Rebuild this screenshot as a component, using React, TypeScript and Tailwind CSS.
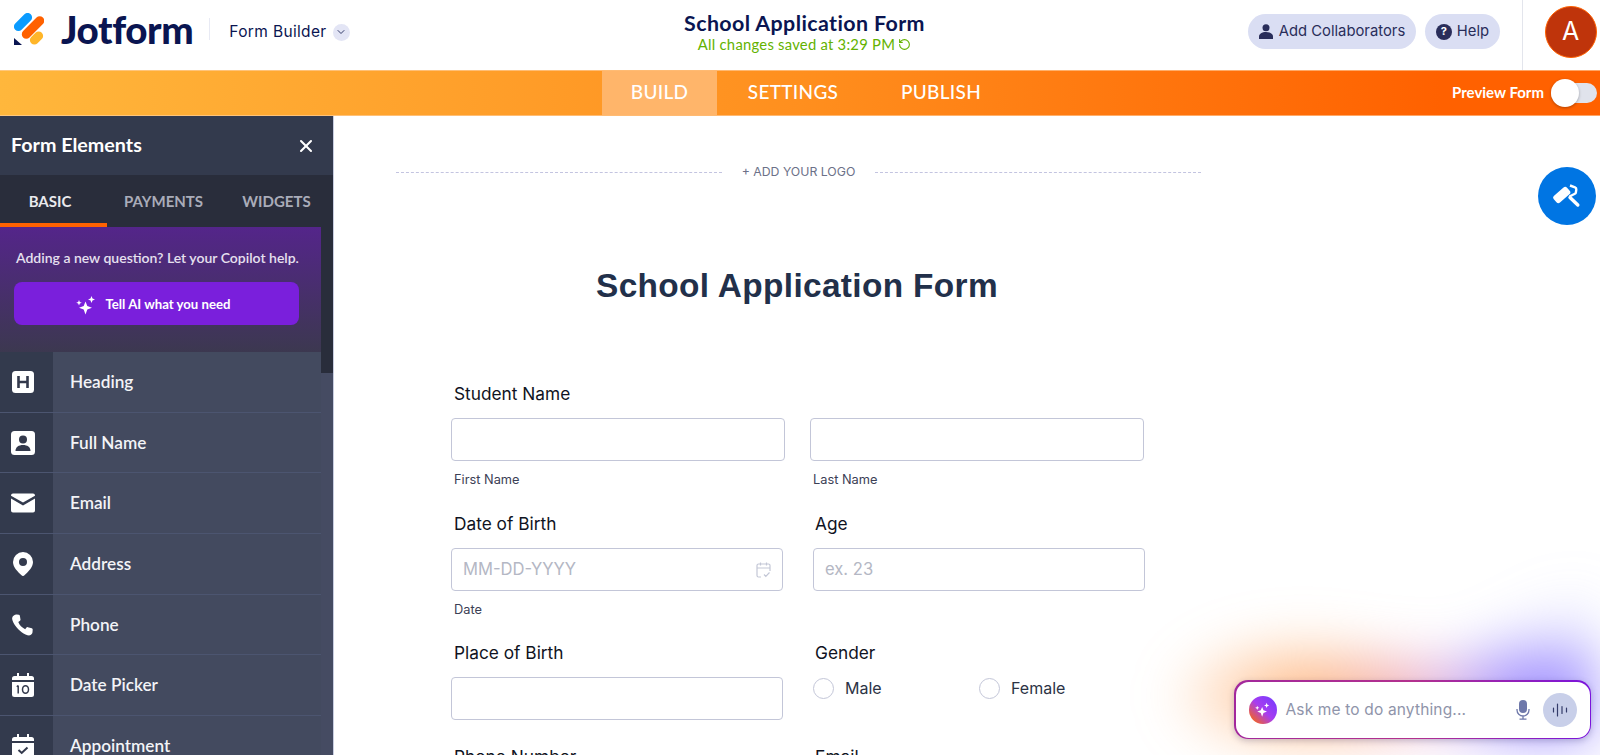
import React from "react";
import { X, ChevronDown, RotateCw } from "lucide-react";

const HEAD_FONT = "font-['Lato','Noto_Sans',sans-serif]";

function JotformMark() {
  return (
    <svg width="30" height="32" viewBox="0 0 30 32" aria-hidden="true">
      <rect x="-2" y="4.500" width="22" height="9" rx="4.500" fill="#0a9bff" transform="rotate(-45 9 9)" />
      <rect x="5" y="10" width="28" height="9" rx="4.500" fill="#ff6100" transform="rotate(-45 19 14.500)" />
      <rect x="15" y="20.500" width="15" height="9" rx="4.500" fill="#ffb629" transform="rotate(-45 22.500 25)" />
      <path d="M0 25 L8 32 H0 Z" fill="#0a1551" />
    </svg>
  );
}

function Sparkles({ size = 20 }: { size?: number }) {
  return (
    <svg width={size} height={size} viewBox="0 0 20 20" fill="#fff" aria-hidden="true">
      <path d="M9.500 6.500 L11.300 11 L16 12.800 L11.300 14.600 L9.500 19.500 L7.700 14.600 L3 12.800 L7.700 11 Z" />
      <path d="M15.500 1 L16.500 3.500 L19 4.500 L16.500 5.500 L15.500 8 L14.500 5.500 L12 4.500 L14.500 3.500 Z" />
      <path d="M3 5 L3.800 7 L5.800 7.800 L3.800 8.600 L3 10.600 L2.200 8.600 L.2 7.800 L2.200 7 Z" />
    </svg>
  );
}

const icons: Record<string, React.ReactNode> = {
  Heading: (
    <svg width="22" height="22" viewBox="0 0 22 22" aria-hidden="true">
      <rect width="22" height="22" rx="3.500" fill="#fff" />
      <path d="M6.500 5v12M15.500 5v12M6.500 11h9" stroke="#33394c" strokeWidth="2.600" fill="none" />
    </svg>
  ),
  "Full Name": (
    <svg width="24" height="24" viewBox="0 0 24 24" aria-hidden="true">
      <rect width="24" height="24" rx="3.500" fill="#fff" />
      <circle cx="12" cy="8.500" r="4" fill="#33394c" />
      <path d="M4.500 20c0-4 3.200-6 7.500-6s7.500 2 7.500 6z" fill="#33394c" />
    </svg>
  ),
  Email: (
    <svg width="24" height="20" viewBox="0 0 24 20" aria-hidden="true">
      <path d="M0 2.500A2 2 0 0 1 2 .5h20a2 2 0 0 1 2 2v.3L12 9.500 0 2.800z" fill="#fff" />
      <path d="M0 5.600l12 6.800 12-6.800V17.500a2 2 0 0 1-2 2H2a2 2 0 0 1-2-2z" fill="#fff" />
    </svg>
  ),
  Address: (
    <svg width="20" height="24" viewBox="0 0 20 24" aria-hidden="true">
      <path fillRule="evenodd" d="M10 0a10 10 0 0 1 10 10c0 5-4.500 9.500-8.800 13.500a1.800 1.800 0 0 1-2.400 0C4.500 19.500 0 15 0 10A10 10 0 0 1 10 0zm0 6a4 4 0 1 0 0 8 4 4 0 0 0 0-8z" fill="#fff" />
    </svg>
  ),
  Phone: (
    <svg width="22" height="22" viewBox="0 0 22 22" aria-hidden="true">
      <path d="M4.800.5l2 .3c.6.1 1 .5 1.100 1.100l.6 3.600c.1.500-.1 1-.5 1.300L6.300 8c1.100 3 3.700 5.700 6.900 7.200l1.300-1.600c.3-.4.800-.6 1.300-.4l4 1.100c.6.200 1 .7.900 1.300l-.2 2.700c-.1 1.300-1.100 2.600-2.500 3-1.200.3-2.700-.1-4.500-.9C8.300 18 3.600 13.200 1.100 8 .2 6 -.1 4.600.3 3.400.8 1.700 3 .2 4.800.5z" fill="#fff" />
    </svg>
  ),
  "Date Picker": (
    <svg width="22" height="24" viewBox="0 0 22 24" aria-hidden="true">
      <path d="M5 0h2v3h8V0h2v3h2.500A2.500 2.500 0 0 1 22 5.500V7H0V5.500A2.500 2.500 0 0 1 2.500 3H5z" fill="#fff" />
      <path d="M0 9h22v12.500a2.500 2.500 0 0 1-2.500 2.500h-17A2.500 2.500 0 0 1 0 21.500z" fill="#fff" />
      <path d="M6.200 12.500v8M4.800 13.800l1.400-1.300" stroke="#33394c" strokeWidth="1.500" fill="none" />
      <ellipse cx="13.500" cy="16.500" rx="3" ry="3.800" stroke="#33394c" strokeWidth="1.500" fill="none" />
    </svg>
  ),
  Appointment: (
    <svg width="22" height="24" viewBox="0 0 22 24" aria-hidden="true">
      <path d="M5 0h2v3h8V0h2v3h2.500A2.500 2.500 0 0 1 22 5.500V7H0V5.500A2.500 2.500 0 0 1 2.500 3H5z" fill="#fff" />
      <path d="M0 9h22v12.500a2.500 2.500 0 0 1-2.500 2.500h-17A2.500 2.500 0 0 1 0 21.500z" fill="#fff" />
      <path d="M6.500 16l3.200 3 5.800-5.500" stroke="#33394c" strokeWidth="2" fill="none" />
    </svg>
  ),
};

const ELEMENTS = ["Heading", "Full Name", "Email", "Address", "Phone", "Date Picker", "Appointment"];

function Header() {
  return (
    <header className={`flex h-[70px] items-stretch bg-white ${HEAD_FONT}`}>
      <div className="flex w-[440px] items-center pb-[12px] pl-[14px]">
        <JotformMark />
        <span className="ml-[17px] text-[38.500px] leading-none font-black tracking-[-0.4px] text-[#0a1551]">Jotform</span>
        <span className="ml-[16px] h-[22px] w-px bg-[#e8eaf4]" />
        <span className="mt-[6px] ml-[19px] font-['Inter',sans-serif] text-[15.500px] tracking-[0.35px] text-[#0a1551]">Form Builder</span>
        <span className="mt-[6px] ml-[6px] flex h-[17px] w-[17px] items-center justify-center rounded-full bg-[#e3e5f5] text-[#343c6a]">
          <ChevronDown size={12} strokeWidth={2} />
        </span>
      </div>
      <div className="flex flex-1 flex-col items-center pt-[10px] pr-[79px]">
        <span className="text-[21.400px] leading-[26px] font-bold tracking-[0.4px] text-[#0a1551]">School Application Form</span>
        <span className="flex items-center gap-[3px] text-[14.800px] leading-[16px] tracking-[0.25px] text-[#64b200]">
          All changes saved at 3:29 PM
          <RotateCw size={13} strokeWidth={2} className="-scale-x-100" />
        </span>
      </div>
      <div className="flex items-center gap-[9px] pb-[7px] font-['Inter',sans-serif] text-[14.800px] text-[#292d5a]">
        <button className="flex h-[35px] w-[168px] items-center justify-center gap-[6px] rounded-full bg-[#dadef3]">
          <svg width="14" height="15" viewBox="0 0 14 15" fill="#292d5a" aria-hidden="true">
            <circle cx="7" cy="3.700" r="3.500" />
            <path d="M0 15v-2.500C0 9.800 3 8 7 8s7 1.800 7 4.500V15z" />
          </svg>
          Add Collaborators
        </button>
        <button className="flex h-[35px] w-[75px] items-center justify-center gap-[5px] rounded-full bg-[#dadef3]">
          <span className="flex h-4 w-4 items-center justify-center rounded-full bg-[#292d5a] text-[11px] font-bold text-white">?</span>
          Help
        </button>
      </div>
      <div className="ml-[22px] flex w-[78px] justify-center border-l border-[#e3e5ec] pt-[6px] pl-[18px]">
        <span className="flex h-[52px] w-[52px] items-center justify-center rounded-full border border-[#ff6100] bg-[#bf340b] font-['Inter',sans-serif] text-[25px] text-white">A</span>
      </div>
    </header>
  );
}

function NavBar() {
  return (
    <nav className="flex h-[46px] items-stretch border-y border-[#ffd3a8]/60 bg-[linear-gradient(90deg,#ffb73c_0%,#ff8f1e_50%,#ff6100_90%)] pl-[602px] font-['Lato',sans-serif] text-[19px] font-medium tracking-[0.3px] text-white">
      <span className="flex w-[115px] items-center justify-center bg-[#ffb56a] pb-px">BUILD</span>
      <span className="flex w-[152px] items-center justify-center pb-px">SETTINGS</span>
      <span className="flex w-[144px] items-center justify-center pb-px">PUBLISH</span>
      <div className="ml-auto flex items-center pr-[3px]">
        <span className="mr-[7px] pb-px text-[15px] font-bold tracking-normal">Preview Form</span>
        <div className="relative h-5 w-[46px] rounded-full bg-[#e0e3ec]">
          <span className="absolute top-[-4px] left-0 h-7 w-7 rounded-full bg-white shadow-[0_1px_3px_rgba(0,0,0,0.3)]" />
        </div>
      </div>
    </nav>
  );
}

function Sidebar() {
  return (
    <aside className={`flex w-[334px] shrink-0 flex-col border-r border-[#c8cde0] bg-[#454b62] ${HEAD_FONT}`}>
      <div className="flex h-[59px] shrink-0 items-center justify-between bg-[#333a4d] pr-[17px] pl-[11px] text-white">
        <span className="pb-[2px] text-[19.700px] font-bold">Form Elements</span>
        <X size={20} strokeWidth={2.500} />
      </div>
      <div className="flex h-[52px] shrink-0 bg-[#292d3b] text-[15px] font-bold text-[#a9acb9]">
        <span className="relative flex w-[107px] items-center justify-center pr-[7px] text-[#e9eaee]">
          BASIC
          <span className="absolute right-0 bottom-0 left-0 h-1 bg-[#ff6100]" />
        </span>
        <span className="flex w-[113px] items-center justify-center">PAYMENTS</span>
        <span className="flex w-[113px] items-center justify-center">WIDGETS</span>
      </div>
      <div className="flex min-h-0 flex-1">
        <div className="w-[321px] shrink-0">
          <div className="h-[125px] bg-[linear-gradient(180deg,#54258a_0%,#3c3850_100%)] px-[14px] pt-[21px]">
            <p className="pl-[2px] text-[14px] leading-[20px] font-semibold whitespace-nowrap text-[#e6e0ef]">Adding a new question? Let your Copilot help.</p>
            <button className="mt-[14px] flex h-[43px] w-[285px] items-center justify-center gap-[9px] rounded-lg bg-[#7a1fdc] pt-[2px] pr-[6px] text-[13.200px] font-bold text-white">
              <Sparkles />
              Tell AI what you need
            </button>
          </div>
          {ELEMENTS.map((name) => (
            <div key={name} className="flex h-[60.700px] border-b border-[#4c5570]">
              <div className="flex w-[53px] items-center bg-[#333a4d]">
                <div className="flex w-[46px] justify-center">{icons[name]}</div>
              </div>
              <div className="flex flex-1 items-center bg-[#434a5f] pl-[17px] text-[17.200px] font-semibold text-[#f3f4f7]">{name}</div>
            </div>
          ))}
        </div>
        <div className="flex-1">
          <div className="h-[146px] bg-[#292d3b]" />
        </div>
      </div>
    </aside>
  );
}

function Field({ w = "w-[334px]", placeholder, icon }: { w?: string; placeholder?: string; icon?: boolean }) {
  return (
    <div className={`flex h-[43px] items-center justify-between rounded-[4px] border border-[#c3c6d8] px-[11px] text-[16.600px] text-[#b4b7c4] ${w}`}>
      <span>{placeholder}</span>
      {icon && (
        <svg width="15" height="16" viewBox="0 0 15 16" fill="none" stroke="#c3c7d6" strokeWidth="1.200" aria-hidden="true">
          <path d="M5 15H2.500A1.500 1.500 0 0 1 1 13.500v-10A1.500 1.500 0 0 1 2.500 2h10A1.500 1.500 0 0 1 14 3.500V9M1 6h13M4.500 .5v3M10.500 .5v3M8 12.500l1.800 1.800 3.700-3.800" />
        </svg>
      )}
    </div>
  );
}

function Label({ children, className = "" }: { children: React.ReactNode; className?: string }) {
  return <div className={`text-[17.300px] leading-[20px] text-[#0f1322] ${className}`}>{children}</div>;
}

function Sub({ children }: { children: React.ReactNode }) {
  return <div className="mt-[11px] pl-[3px] text-[12.800px] leading-[15px] text-[#3c4055]">{children}</div>;
}

function Radio({ label }: { label: string }) {
  return (
    <div className="flex w-[166px] items-start gap-[11px]">
      <span className="h-[21px] w-[21px] rounded-full border border-[#c3c6d8]" />
      <span className="text-[16px] leading-[20px] text-[#2c3345]">{label}</span>
    </div>
  );
}

function FormArea() {
  return (
    <main className="min-w-0 flex-1 bg-white pt-[47px] font-['Inter',sans-serif]">
      <div className="flex w-[867px] items-center pl-[62px]">
        <span className="w-[326px] shrink-0 border-t border-dashed border-[#c3c4e0]" />
        <span className="w-[153px] shrink-0 text-center text-[12.300px] text-[#6c7188]">+ ADD YOUR LOGO</span>
        <span className="w-[326px] shrink-0 border-t border-dashed border-[#c3c4e0]" />
      </div>
      <h1 className="mt-[86px] w-[926px] text-center font-['Liberation_Sans',Arial,sans-serif] text-[33.400px] leading-[38px] font-bold tracking-[0.35px] text-[#22304a]">School Application Form</h1>
      <div className="mt-[79px] pl-[117px]">
        <Label className="pl-[3px]">Student Name</Label>
        <div className="mt-[14px] flex gap-[25px]">
          <div>
            <Field />
            <Sub>First Name</Sub>
          </div>
          <div>
            <Field />
            <Sub>Last Name</Sub>
          </div>
        </div>
        <div className="mt-[27px] flex gap-[30px]">
          <div className="w-[332px]">
            <Label className="pl-[3px]">Date of Birth</Label>
            <div className="mt-[14px]"><Field w="w-[332px]" placeholder="MM-DD-YYYY" icon /></div>
            <Sub>Date</Sub>
          </div>
          <div className="w-[332px]">
            <Label className="pl-[2px]">Age</Label>
            <div className="mt-[14px]"><Field w="w-[332px]" placeholder="ex. 23" /></div>
          </div>
        </div>
        <div className="mt-[26px] flex gap-[30px]">
          <div className="w-[332px]">
            <Label className="pl-[3px]">Place of Birth</Label>
            <div className="mt-[14px]"><Field w="w-[332px]" /></div>
          </div>
          <div className="w-[332px]">
            <Label className="pl-[2px]">Gender</Label>
            <div className="mt-[15px] flex"><Radio label="Male" /><Radio label="Female" /></div>
          </div>
        </div>
        <div className="mt-[27px] flex gap-[30px]">
          <Label className="w-[332px] pl-[3px]">Phone Number</Label>
          <Label className="w-[332px] pl-[2px]">Email</Label>
        </div>
      </div>
    </main>
  );
}

function ChatBox() {
  return (
    <>
      <div className="absolute right-0 bottom-0 h-[170px] w-[480px] bg-[radial-gradient(ellipse_140px_68px_at_38%_65%,rgba(255,150,70,0.7),transparent),radial-gradient(ellipse_110px_58px_at_59%_65%,rgba(215,100,170,0.5),transparent),radial-gradient(ellipse_125px_72px_at_86%_65%,rgba(110,80,255,0.7),transparent),radial-gradient(ellipse_140px_110px_at_100%_60%,rgba(130,130,255,0.3),transparent)] blur-xl" />
      <div className="absolute right-[9px] bottom-[16px] h-[59px] w-[357px] rounded-[14px] bg-[linear-gradient(90deg,#a2289c,#b3318e_50%,#7a13dc)] p-[1.500px] shadow-[0_2px_6px_rgba(40,40,90,0.25)]">
        <div className="flex h-full items-center rounded-[13px] bg-white pr-[13px] pl-[13px] font-['Inter',sans-serif]">
          <span className="flex h-[28px] w-[28px] items-center justify-center rounded-full bg-[linear-gradient(45deg,#ff6a00_5%,#a83df0_50%,#6f3cff)]">
            <Sparkles size={15} />
          </span>
          <span className="ml-[9px] flex-1 text-[15.500px] tracking-[0.15px] text-[#8f94aa]">Ask me to do anything...</span>
          <svg width="14" height="20" viewBox="0 0 14 20" fill="none" className="mr-[13px]" aria-hidden="true">
            <rect x="3" y="0" width="8" height="13" rx="4" fill="#6e78aa" />
            <path d="M1 9v1a6 6 0 0 0 12 0V9M7 16v3M3.500 19.200h7" stroke="#6e78aa" strokeWidth="1.300" />
          </svg>
          <span className="flex h-[34px] w-[34px] items-center justify-center rounded-full bg-[#c8cfe9]">
            <svg width="16" height="14" viewBox="0 0 16 14" stroke="#343c6a" strokeWidth="1.200" strokeLinecap="round" aria-hidden="true">
              <path d="M1.500 5v4M5.500 1v12M10 3.500v7M14.500 5v4" />
            </svg>
          </span>
        </div>
      </div>
    </>
  );
}

export default function App() {
  return (
    <div className="relative flex h-[755px] w-full flex-col overflow-hidden bg-white">
      <Header />
      <NavBar />
      <div className="flex min-h-0 flex-1">
        <Sidebar />
        <FormArea />
      </div>
      <button aria-label="Form designer" className="absolute top-[167px] right-[4px] flex h-[58px] w-[58px] items-center justify-center rounded-full bg-[#0075e3]">
        <svg width="28" height="28" viewBox="0 0 28 28" aria-hidden="true">
          <rect x="0" y="8.500" width="17.500" height="9" rx="2.500" fill="#fff" transform="rotate(-41 8.750 13)" />
          <path d="M17 3.500l5 1.800c1 .4 1.400 1 1.300 2l-.4 3c-.1.700-.4 1.100-1 1.400l-5.400 2.800" stroke="#fff" strokeWidth="2.400" strokeLinejoin="round" fill="none" />
          <path d="M17 15.500l7.800 7.500" stroke="#fff" strokeWidth="3.400" strokeLinecap="round" />
        </svg>
      </button>
      <ChatBox />
    </div>
  );
}
